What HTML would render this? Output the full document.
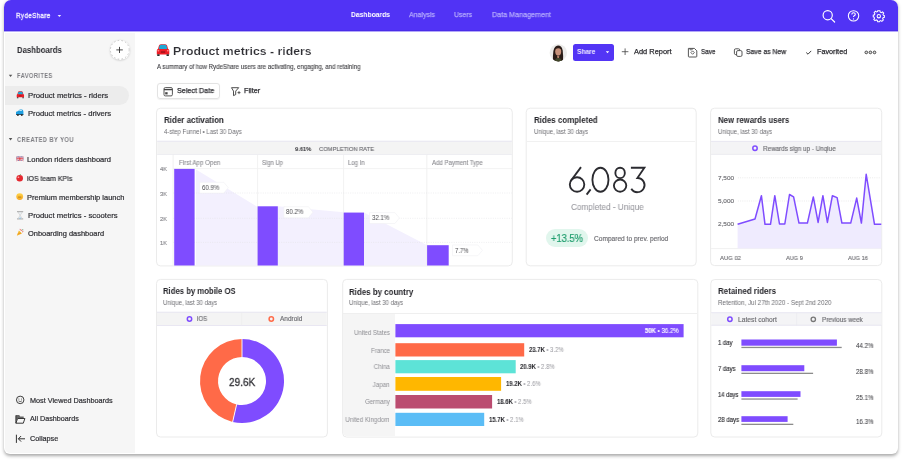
<!DOCTYPE html>
<html><head><meta charset="utf-8"><style>
html,body{margin:0;padding:0;width:904px;height:462px;overflow:hidden;background:#ffffff;}
body{position:relative;font-family:"Liberation Sans", sans-serif;}
.t{position:absolute;white-space:nowrap;line-height:1;will-change:transform;}
.a{position:absolute;}
.card{border:1px solid #ebebeb;border-radius:4px;box-sizing:border-box;background:#fff;}
</style></head><body>
<!-- frame -->
<div class="a" style="left:4px;top:0;width:894px;height:454px;border-radius:7px 7px 6px 6px;background:#fff;box-shadow:0 1.5px 3.5px rgba(0,0,0,0.34);"></div>
<!-- header -->
<div class="a" style="left:4px;top:0;width:894px;height:31px;border-radius:7px 7px 0 0;background:#5133f5;border-bottom:1px solid #4a2ce8;box-sizing:border-box;"></div>
<!-- sidebar -->
<div class="a" style="left:4px;top:31px;width:894px;height:1px;background:rgba(74,48,240,0.42);"></div>
<div class="a" style="left:5px;top:33px;width:130px;height:420px;border-radius:0 0 0 5px;background:#f6f6f6;"></div>
<!-- selected item -->
<div class="a" style="left:5px;top:86px;width:123.5px;height:18.7px;border-radius:0 9.5px 9.5px 0;background:#ececec;"></div>

<!-- header icons -->
<svg class="a" style="left:0;top:0" width="904" height="32" viewBox="0 0 904 32">
  <path d="M57.6 14.9 L61.2 14.9 L59.4 16.9 Z" fill="#eeeaff"/>
  <circle cx="827.7" cy="15.2" r="4.6" fill="none" stroke="#fff" stroke-width="1.15"/>
  <path d="M831.1 18.6 L834.6 22" stroke="#fff" stroke-width="1.2" stroke-linecap="round"/>
  <circle cx="853.55" cy="15.85" r="5.2" fill="none" stroke="#fff" stroke-width="1.05"/>
  <path d="M851.8 14.4 Q851.8 12.7 853.55 12.7 Q855.3 12.7 855.3 14.3 Q855.3 15.3 854.2 15.8 Q853.55 16.1 853.55 17.1" fill="none" stroke="#fff" stroke-width="1.1"/>
  <circle cx="853.5" cy="18.9" r="0.6" fill="#fff"/>
  <g transform="translate(878.8 16.1) scale(0.93)" fill="none" stroke="#fff" stroke-width="1.1">
    <path d="M-1.2 -5.7 L1.2 -5.7 L1.6 -4.3 L2.7 -3.8 L4 -4.6 L5.3 -3.3 L4.5 -2 L5 -0.8 L6 -0.5 L6 1.3 L4.6 1.7 L4.1 2.9 L4.9 4.2 L3.3 5.6 L2.1 4.8 L1 5.3 L0.7 6 L-1.2 6 L-1.6 4.6 L-2.8 4.1 L-4.1 4.9 L-5.4 3.5 L-4.6 2.3 L-5.1 1.1 L-6 0.8 L-6 -1 L-4.7 -1.4 L-4.2 -2.6 L-5 -3.9 L-3.6 -5.2 L-2.4 -4.4 L-1.5 -4.8 Z"/>
    <circle cx="0" cy="0.1" r="1.8"/>
  </g>
</svg>

<!-- sidebar plus button -->
<div class="a" style="left:110px;top:40px;width:19.6px;height:19.6px;border-radius:50%;background:#fff;box-shadow:0 0.5px 2px rgba(0,0,0,0.18);"></div>
<svg class="a" style="left:0;top:32px" width="135" height="422" viewBox="0 32 135 422">
  <circle cx="119.8" cy="49.8" r="9.4" fill="none" stroke="#aaa" stroke-width="0.6" stroke-dasharray="1.6 2.2"/>
  <path d="M119.5 46.9 V53 M116.3 49.9 H122.8" stroke="#333" stroke-width="0.9"/>
  <path d="M8.8 74.7 H12.3 L10.55 77.1 Z" fill="#555"/>
  <path d="M8.8 138.1 H12.3 L10.55 140.5 Z" fill="#555"/>
  <!-- red car (front) -->
  <g transform="translate(16.6 91.3) scale(0.585)">
    <path d="M0.2 10.3 V6.4 Q0.3 5 1.5 4.5 L2.3 1.5 Q2.7 0 4.3 0 H8.6 Q10.2 0 10.6 1.5 L11.4 4.5 Q12.6 5 12.7 6.4 V10.3 Z" fill="#ee1c25"/>
    <path d="M2.2 4.9 L2.9 1.8 Q3.3 0.6 4.6 0.6 H8.3 Q9.6 0.6 10 1.8 L10.7 4.9 Z" fill="#1fa8d4"/>
    <rect x="0.5" y="10" width="2.6" height="1.9" rx="0.6" fill="#2b2b2b"/>
    <rect x="9.8" y="10" width="2.6" height="1.9" rx="0.6" fill="#2b2b2b"/>
    <rect x="4.3" y="7" width="4.3" height="1.7" fill="#a8121b"/>
  </g>
  <!-- blue car (side) -->
  <path d="M16 114.7 V112.5 Q16 111.7 16.8 111.5 L18.2 111 L19.4 109.8 Q19.8 109.4 20.4 109.4 H21.8 Q22.6 109.4 23 110.2 L23.4 111.4 V114.7 Z" fill="#1e9ee0"/>
  <path d="M18.7 111.1 L19.8 110 H21.6 L22.2 111.1 Z" fill="#b9e5f8"/>
  <rect x="16" y="114" width="7.4" height="0.9" fill="#1b4f6e"/>
  <circle cx="17.9" cy="115" r="0.95" fill="#333"/><circle cx="21.8" cy="115" r="0.95" fill="#333"/>
  <!-- UK flag -->
  <g transform="translate(16.4 156.6)">
    <rect x="0" y="0" width="7" height="4.4" rx="0.8" fill="#44509a"/>
    <path d="M0 0 L7 4.4 M7 0 L0 4.4" stroke="#fff" stroke-width="1.1"/>
    <path d="M0 0 L7 4.4 M7 0 L0 4.4" stroke="#d8303c" stroke-width="0.5"/>
    <path d="M3.5 0 V4.4 M0 2.2 H7" stroke="#fff" stroke-width="1.7"/>
    <path d="M3.5 0 V4.4 M0 2.2 H7" stroke="#d8303c" stroke-width="1"/>
  </g>
  <!-- apple -->
  <g transform="translate(16.2 174.4)">
    <circle cx="3.5" cy="3.9" r="3.3" fill="#e52830"/>
    <path d="M3.5 1 L4.4 -0.2" stroke="#3a8a3a" stroke-width="0.8"/>
    <ellipse cx="2.2" cy="2.9" rx="0.9" ry="0.7" fill="#ffb0b0"/>
  </g>
  <!-- neutral face -->
  <defs><linearGradient id="fg" x1="0" y1="0" x2="0" y2="1"><stop offset="0" stop-color="#ffd54a"/><stop offset="1" stop-color="#f6a623"/></linearGradient></defs>
  <g transform="translate(16.2 193.2)">
    <circle cx="3.5" cy="3.4" r="3.4" fill="url(#fg)"/>
    <path d="M1.9 3.9 H5.1" stroke="#8a5a10" stroke-width="0.6"/>
  </g>
  <!-- hourglass -->
  <g transform="translate(16.8 211.4)">
    <rect x="0.2" y="0" width="6.2" height="0.7" fill="#8a8a8a"/>
    <rect x="0.2" y="7.2" width="6.2" height="0.7" fill="#8a8a8a"/>
    <path d="M1.1 0.7 L5.5 0.7 L3.3 3.95 Z M1.1 7.2 L5.5 7.2 L3.3 3.95 Z" fill="#eef3f7" stroke="#b8b8b8" stroke-width="0.45"/>
    <path d="M2 7.2 L4.6 7.2 L3.3 5.9 Z" fill="#7fb7e0"/>
  </g>
  <!-- party popper -->
  <g transform="translate(16.8 228.9)">
    <path d="M0 6.8 L2.1 1.6 L5.2 4.7 Z" fill="#f5b82a"/>
    <path d="M0.6 5.3 L4.2 4.2" stroke="#e27a20" stroke-width="0.5"/>
    <path d="M3.2 0 L3.8 1.5 M5.2 0.6 L4.7 2.1 M6.6 2.5 L5.2 3.1" stroke="#e2463a" stroke-width="0.7"/>
    <circle cx="6" cy="0.8" r="0.5" fill="#3aa06a"/>
  </g>
  <!-- bottom icons -->
  <circle cx="20.2" cy="399.9" r="3.75" fill="none" stroke="#3d3d3d" stroke-width="1"/>
  <circle cx="18.9" cy="399.1" r="0.5" fill="#3d3d3d"/><circle cx="21.5" cy="399.1" r="0.5" fill="#3d3d3d"/>
  <path d="M18.5 400.9 Q20.2 402.4 21.9 400.9" fill="none" stroke="#3d3d3d" stroke-width="0.75"/>
  <path d="M15.9 415.1 H19.2 L20.2 416.4 H23.7 V418.3 H17.5 L15.9 421.5 Z" fill="#666"/>
  <path d="M15.9 415.4 V423.2 H23.3 L24.9 418.5 H17.6 L15.9 423.2" fill="none" stroke="#2e2e2e" stroke-width="0.95" stroke-linejoin="round"/>
  <path d="M16.4 434.7 V442.9" stroke="#333" stroke-width="1"/>
  <path d="M25 438.8 H18.4 M21.1 436 L18.4 438.8 L21.1 441.6" fill="none" stroke="#333" stroke-width="1"/>
</svg>

<!-- title area -->
<svg class="a" style="left:150px;top:38px" width="740" height="70" viewBox="150 38 740 70">
  <!-- title car -->
  <g transform="translate(156.6 44.2)">
    <path d="M0.2 10.3 V6.4 Q0.3 5 1.5 4.5 L2.3 1.5 Q2.7 0 4.3 0 H8.6 Q10.2 0 10.6 1.5 L11.4 4.5 Q12.6 5 12.7 6.4 V10.3 Z" fill="#ee1c25"/>
    <path d="M2.2 4.9 L2.9 1.8 Q3.3 0.6 4.6 0.6 H8.3 Q9.6 0.6 10 1.8 L10.7 4.9 Z" fill="#1fa8d4"/>
    <rect x="0.5" y="10" width="2.6" height="1.7" rx="0.6" fill="#2b2b2b"/>
    <rect x="9.8" y="10" width="2.6" height="1.7" rx="0.6" fill="#2b2b2b"/>
    <rect x="4.3" y="7" width="4.3" height="1.7" fill="#a8121b"/>
    <ellipse cx="1.7" cy="6.6" rx="1" ry="0.7" fill="#ff8a8a"/>
    <ellipse cx="11.2" cy="6.6" rx="1" ry="0.7" fill="#ff8a8a"/>
  </g>
  <!-- calendar icon -->
  <rect x="164" y="87.6" width="8.4" height="8.3" rx="1.3" fill="none" stroke="#444" stroke-width="0.9"/>
  <path d="M164 89.6 H172.4" stroke="#444" stroke-width="1.3"/>
  <rect x="165.2" y="92.2" width="2.4" height="2.2" fill="#444"/>
  <!-- filter icon -->
  <path d="M231.5 87.7 H238.7 L235.7 91.1 V94.6 L233.5 95.6 V91.1 Z" fill="none" stroke="#3a3a3a" stroke-width="0.9" stroke-linejoin="round"/>
  <path d="M237.5 92.6 H240.5 M239 91.1 V94.1" stroke="#3a3a3a" stroke-width="0.8"/>
  <!-- plus add report -->
  <path d="M625.1 48.4 V55 M621.8 51.7 H628.4" stroke="#444" stroke-width="0.8"/>
  <!-- save icon -->
  <path d="M688.4 48.4 H694.4 L696.8 50.8 V56.3 Q696.8 57 696.1 57 H689.1 Q688.4 57 688.4 56.3 Z" fill="none" stroke="#444" stroke-width="0.9" stroke-linejoin="round"/>
  <path d="M690 48.4 V49.8 H692.2 V48.4" fill="none" stroke="#444" stroke-width="0.7"/>
  <path d="M692.6 50.9 L694.3 52.6 L692.6 54.3 L690.9 52.6 Z" fill="none" stroke="#444" stroke-width="0.8"/>
  <!-- copy icon -->
  <rect x="734.4" y="48.8" width="5.4" height="5.8" rx="1.3" fill="none" stroke="#444" stroke-width="0.9"/>
  <rect x="736.6" y="50.6" width="5.4" height="5.8" rx="1.3" fill="#fff" stroke="#444" stroke-width="0.9"/>
  <!-- check -->
  <path d="M806.2 52.5 L808 54.2 L811.2 50.9" fill="none" stroke="#333" stroke-width="0.95"/>
  <!-- dots -->
  <circle cx="866.3" cy="52.4" r="1.35" fill="#ddd" stroke="#333" stroke-width="0.85"/>
  <circle cx="870.4" cy="52.4" r="1.35" fill="#ddd" stroke="#333" stroke-width="0.85"/>
  <circle cx="874.5" cy="52.4" r="1.35" fill="#ddd" stroke="#333" stroke-width="0.85"/>
</svg>
<!-- select date button -->
<div class="a" style="left:156.9px;top:83.3px;width:62.8px;height:15.9px;border:1px solid #e3e3e3;border-radius:3px;box-sizing:border-box;box-shadow:0 0.5px 1px rgba(0,0,0,0.06);"></div>
<!-- avatar -->
<svg class="a" style="left:549px;top:43px" width="19" height="20" viewBox="549 43 19 20">
  <defs><clipPath id="av"><circle cx="558.3" cy="52.7" r="8.7"/></clipPath></defs>
  <g clip-path="url(#av)">
    <rect x="549" y="43" width="19" height="20" fill="#ececea"/>
    <path d="M553 62 Q552.6 56 553.4 51 Q554.4 45.6 558 45.5 Q561.8 45.6 562.7 50.5 Q563.4 56 563 62 Z" fill="#2a1c17"/>
    <ellipse cx="558.2" cy="51.4" rx="3" ry="3.9" fill="#c7917a"/>
    <path d="M555.2 49.6 Q558.2 47.2 561.2 49.4 L561.2 47.8 Q558.2 45.8 555.2 48 Z" fill="#2a1c17"/>
    <path d="M554.2 63 Q555 58.2 558.2 57.6 Q561.4 58.2 562.4 63 Z" fill="#41462a"/>
    <path d="M557 55.4 L559.4 55.4 L559 58 L557.4 58 Z" fill="#b5836e"/>
  </g>
</svg>
<!-- share button -->
<div class="a" style="left:572.5px;top:43.9px;width:41.5px;height:16.9px;border-radius:2.5px;background:#5335f5;"></div>
<svg class="a" style="left:600px;top:44px" width="14" height="17" viewBox="600 44 14 17">
  <path d="M605.8 51.2 H609.2 L607.5 53.2 Z" fill="#fff"/>
</svg>
<!-- cards outlines -->
<svg class="a" style="left:0;top:0" width="904" height="462" viewBox="0 0 904 462">
  <g fill="#fff" stroke="#ebebeb" stroke-width="1">
    <rect x="156.5" y="108.2" width="355.8" height="157.7" rx="4"/>
    <rect x="526.2" y="108.2" width="170" height="157.6" rx="4"/>
    <rect x="710.6" y="108.2" width="171.1" height="157.4" rx="4"/>
    <rect x="156.5" y="279.4" width="170.9" height="157.6" rx="4"/>
    <rect x="342.7" y="279.4" width="355.1" height="157.7" rx="4"/>
    <rect x="710.8" y="279.5" width="171" height="157.5" rx="4"/>
  </g>
</svg>
<!-- rider activation funnel -->
<svg class="a" style="left:156px;top:140px" width="358" height="127" viewBox="156 140 358 127">
  <rect x="157.2" y="141" width="354.7" height="13.6" fill="#f4f4f4"/>
  <path d="M157.2 141.2 H511.9" stroke="#e4e2f0" stroke-width="0.8"/>
  <path d="M157.2 154.5 H511.9" stroke="#ebebf0" stroke-width="0.8"/>
  <polygon points="196,169.5 257.6,207 277.8,206.3 343.7,212.2 364,212.6 427.1,245.2 427.1,265.4 196,265.4" fill="#f3f0fe"/>
  <path d="M173.1 154.6 V265.4 M257.6 154.6 V265.4 M343.6 154.6 V265.4 M426.8 154.6 V265.4" stroke="#eeeeee" stroke-width="0.8"/>
  <path d="M173.1 168.6 H511.9" stroke="#efefef" stroke-width="0.8"/>
  <path d="M173.1 193 H511.9 M173.1 218.3 H511.9 M173.1 242.4 H511.9" stroke="#e4e4e8" stroke-width="0.6" stroke-dasharray="1 1.3"/>
  <rect x="174.2" y="168.9" width="20.4" height="96.6" fill="#7f4cff"/>
  <rect x="257.6" y="206.3" width="20.2" height="59.2" fill="#7f4cff"/>
  <rect x="343.7" y="212.6" width="20.3" height="52.9" fill="#7f4cff"/>
  <rect x="427.1" y="245.2" width="21.6" height="20.3" fill="#7f4cff"/>
  <g fill="#ffffff" stroke="#f0f0f3" stroke-width="0.6">
    <path d="M199.6 182.3 H223.8 L228.3 187.7 L223.8 193.1 H199.6 Z"/>
    <path d="M283.9 206.7 H308.4 L312.9 212.2 L308.4 217.8 H283.9 Z"/>
    <path d="M369.5 212.6 H394.9 L399.4 218 L394.9 223.5 H369.5 Z"/>
    <path d="M452.5 245 H477.9 L482.4 250.3 L477.9 255.7 H452.5 Z"/>
  </g>
</svg>

<!-- rides completed -->
<div class="a" style="left:526.9px;top:141.2px;width:168.4px;height:0.8px;background:#f1f1f1;"></div>
<div class="a" style="left:545.7px;top:229.2px;width:42.3px;height:18.2px;border-radius:9.1px;background:#e1f6ed;"></div>
<svg class="a" style="left:560px;top:160px" width="95" height="40" viewBox="560 160 95 40">
  <g fill="none" stroke="#2b2b30" stroke-width="1.85" stroke-linecap="butt">
    <circle cx="577.05" cy="184.45" r="7.25"/>
    <path d="M581 167.1 L570.7 181"/>
    <path d="M590.6 189.4 L586.6 194.6"/>
    <ellipse cx="600.45" cy="179.7" rx="8.05" ry="12"/>
    <ellipse cx="620.1" cy="172.9" rx="4.75" ry="5.2"/>
    <ellipse cx="620.1" cy="185.6" rx="6.2" ry="6.1"/>
    <path d="M630.9 167.75 H644.4 L637.4 178 A7.1 7.1 0 1 1 631.3 188.7"/>
  </g>
</svg>

<!-- new rewards users -->
<svg class="a" style="left:710px;top:140px" width="174" height="126" viewBox="710 140 174 126">
  <rect x="711.1" y="141.2" width="170.2" height="13.2" fill="#f4f4f6"/>
  <path d="M711.1 141.4 H881.3" stroke="#e4e2f0" stroke-width="0.8"/>
  <path d="M711.1 154.4 H881.3" stroke="#e8e8ee" stroke-width="0.8"/>
  <circle cx="755" cy="148.2" r="2.2" fill="none" stroke="#7f4cff" stroke-width="1.5"/>
  <path d="M737.9 177.8 H881 M737.9 201 H881 M737.9 224.3 H881" stroke="#e3e3e3" stroke-width="0.7" stroke-dasharray="1 1.2"/>
  <path d="M711.1 248.6 H881.3" stroke="#ececec" stroke-width="0.8"/>
  <polygon fill="#efebfe" points="737.6,248.6 737.6,224.3 755,219 761.4,195.7 765,224.3 770.5,224.3 774.8,195.7 779.5,224 784.8,224 789.5,194.5 793.6,196.9 799,223.1 807.4,223.1 813.3,196.9 818.1,222.4 822.9,195.7 827.4,222.4 832.4,195.7 837.1,197.6 841.9,223.1 850.7,223.1 856.7,198.1 861.4,223.1 866.2,174.3 874.5,224.3 881.3,224.3 881.3,248.6"/>
  <polyline fill="none" stroke="#7f4cff" stroke-width="1.5" stroke-linejoin="round" points="737.6,224.3 755,219 761.4,195.7 765,224.3 770.5,224.3 774.8,195.7 779.5,224 784.8,224 789.5,194.5 793.6,196.9 799,223.1 807.4,223.1 813.3,196.9 818.1,222.4 822.9,195.7 827.4,222.4 832.4,195.7 837.1,197.6 841.9,223.1 850.7,223.1 856.7,198.1 861.4,223.1 866.2,174.3 874.5,224.3 881.3,224.3"/>
</svg>

<!-- rides by mobile os -->
<svg class="a" style="left:156px;top:310px" width="172" height="120" viewBox="156 310 172 120">
  <rect x="157" y="312" width="169.8" height="13.6" fill="#f4f4f4"/>
  <path d="M157 312.2 H326.8" stroke="#e4e2f0" stroke-width="0.8"/>
  <path d="M157 325.5 H326.8" stroke="#e4e2f0" stroke-width="0.8"/>
  <path d="M241.6 312.4 V325.3" stroke="#ececec" stroke-width="0.6"/>
  <circle cx="189.5" cy="319" r="2.2" fill="none" stroke="#7f4cff" stroke-width="1.5"/>
  <circle cx="271.3" cy="319" r="2.2" fill="none" stroke="#ff6a48" stroke-width="1.5"/>
  <!-- donut: R=42 r=24 centre 242,381; purple from top clockwise to 193deg -->
  <path d="M242 339 A42 42 0 1 1 232.55 421.92 L236.6 404.38 A24 24 0 1 0 242 357 Z" fill="#7f4cff"/>
  <path d="M232.55 421.92 A42 42 0 0 1 242 339 L242 357 A24 24 0 0 0 236.6 404.38 Z" fill="#ff6a48"/>
  <path d="M242 338.5 V357.2 M232.6 422.2 L236.7 404.2" stroke="#fff" stroke-width="0.9"/>
</svg>

<!-- rides by country -->
<div class="a" style="left:343.1px;top:312.9px;width:52.3px;height:123.3px;background:#f5f5f5;border-radius:0 0 0 4px;"></div>
<div class="a" style="left:343.1px;top:312.5px;width:354.3px;height:0.8px;background:#efefef;"></div>
<svg class="a" style="left:390px;top:320px" width="300" height="110" viewBox="390 320 300 110">
  <rect x="395.4" y="324.1" width="288.2" height="13.2" fill="#7f4cff"/>
  <rect x="395.4" y="343.2" width="128.8" height="13.3" fill="#ff6a48"/>
  <rect x="395.4" y="360.1" width="120.3" height="13.2" fill="#5de3d7"/>
  <rect x="395.4" y="377.0" width="105.7" height="13.8" fill="#ffb700"/>
  <rect x="395.4" y="395.0" width="96.7" height="13.5" fill="#bb4c70"/>
  <rect x="395.4" y="412.8" width="88.8" height="13.2" fill="#5bbdf6"/>
</svg>

<!-- retained riders -->
<svg class="a" style="left:710px;top:310px" width="174" height="120" viewBox="710 310 174 120">
  <rect x="711.2" y="312.5" width="170.3" height="12.9" fill="#f4f4f6"/>
  <path d="M711.2 312.7 H881.5" stroke="#e4e2f0" stroke-width="0.8"/>
  <path d="M711.2 325.3 H881.5" stroke="#e4e2f0" stroke-width="0.8"/>
  <path d="M796.6 312.9 V325.1" stroke="#e9e9ee" stroke-width="0.6"/>
  <circle cx="729.9" cy="319.3" r="2.2" fill="none" stroke="#7f4cff" stroke-width="1.5"/>
  <circle cx="813.3" cy="319.3" r="2.2" fill="none" stroke="#777" stroke-width="1.3"/>
  <rect x="741.4" y="339.5" width="95.5" height="6.2" fill="#7f4cff"/>
  <rect x="741.4" y="346.8" width="100.3" height="1.3" fill="#8c8c8c"/>
  <rect x="741.4" y="365.2" width="62.9" height="6" fill="#7f4cff"/>
  <rect x="741.4" y="372.7" width="71.7" height="1.3" fill="#8c8c8c"/>
  <rect x="741.4" y="391.2" width="59.1" height="5.7" fill="#7f4cff"/>
  <rect x="741.4" y="398.4" width="56.2" height="1.3" fill="#8c8c8c"/>
  <rect x="741.4" y="416.2" width="46.2" height="5.7" fill="#7f4cff"/>
  <rect x="741.4" y="423.7" width="51.9" height="1.3" fill="#8c8c8c"/>
</svg>

<div class='t' style='left:16.00px;transform-origin:0 50%;top:11.96px;font-size:8.0px;font-weight:400;color:#f0edff;transform:scaleX(0.8050);-webkit-text-stroke-width:0.35px;letter-spacing:0.3px;'>RydeShare</div><div class='t' style='left:351.00px;transform-origin:0 50%;top:10.96px;font-size:8.0px;font-weight:700;color:#ffffff;transform:scaleX(0.8435);'>Dashboards</div><div class='t' style='left:409.00px;transform-origin:0 50%;top:10.96px;font-size:8.0px;font-weight:400;color:#b3a9fc;transform:scaleX(0.8726);-webkit-text-stroke-width:0.25px;'>Analysis</div><div class='t' style='left:454.00px;transform-origin:0 50%;top:10.96px;font-size:8.0px;font-weight:400;color:#b3a9fc;transform:scaleX(0.8616);-webkit-text-stroke-width:0.25px;'>Users</div><div class='t' style='left:491.60px;transform-origin:0 50%;top:10.96px;font-size:8.0px;font-weight:400;color:#b3a9fc;transform:scaleX(0.8963);-webkit-text-stroke-width:0.25px;'>Data Management</div><div class='t' style='left:16.50px;transform-origin:0 50%;top:45.82px;font-size:9.0px;font-weight:700;color:#2e2e33;transform:scaleX(0.8613);'>Dashboards</div><div class='t' style='left:16.50px;transform-origin:0 50%;top:72.88px;font-size:6.8px;font-weight:700;color:#7c7c81;transform:scaleX(0.8222);letter-spacing:0.6px;'>FAVORITES</div><div class='t' style='left:27.80px;transform-origin:0 50%;top:92.18px;font-size:7.2px;font-weight:400;color:#2e2e33;transform:scaleX(1.0795);-webkit-text-stroke-width:0.2px;'>Product metrics - riders</div><div class='t' style='left:27.80px;transform-origin:0 50%;top:110.28px;font-size:7.2px;font-weight:400;color:#2e2e33;transform:scaleX(1.0682);-webkit-text-stroke-width:0.2px;'>Product metrics - drivers</div><div class='t' style='left:16.60px;transform-origin:0 50%;top:136.73px;font-size:6.8px;font-weight:700;color:#7c7c81;transform:scaleX(0.8312);letter-spacing:0.6px;'>CREATED BY YOU</div><div class='t' style='left:27.30px;transform-origin:0 50%;top:155.58px;font-size:7.2px;font-weight:400;color:#2e2e33;transform:scaleX(1.0510);-webkit-text-stroke-width:0.2px;'>London riders dashboard</div><div class='t' style='left:27.30px;transform-origin:0 50%;top:174.68px;font-size:7.2px;font-weight:400;color:#2e2e33;transform:scaleX(0.9631);-webkit-text-stroke-width:0.2px;'>iOS team KPIs</div><div class='t' style='left:27.30px;transform-origin:0 50%;top:193.58px;font-size:7.2px;font-weight:400;color:#2e2e33;transform:scaleX(1.0419);-webkit-text-stroke-width:0.2px;'>Premium membership launch</div><div class='t' style='left:27.80px;transform-origin:0 50%;top:212.18px;font-size:7.2px;font-weight:400;color:#2e2e33;transform:scaleX(1.0733);-webkit-text-stroke-width:0.2px;'>Product metrics - scooters</div><div class='t' style='left:27.80px;transform-origin:0 50%;top:229.58px;font-size:7.2px;font-weight:400;color:#2e2e33;transform:scaleX(1.0349);-webkit-text-stroke-width:0.2px;'>Onboarding dashboard</div><div class='t' style='left:30.30px;transform-origin:0 50%;top:396.78px;font-size:7.2px;font-weight:400;color:#2e2e33;transform:scaleX(1.0112);-webkit-text-stroke-width:0.2px;'>Most Viewed Dashboards</div><div class='t' style='left:30.30px;transform-origin:0 50%;top:415.38px;font-size:7.2px;font-weight:400;color:#2e2e33;-webkit-text-stroke-width:0.2px;'>All Dashboards</div><div class='t' style='left:30.30px;transform-origin:0 50%;top:435.28px;font-size:7.2px;font-weight:400;color:#2e2e33;transform:scaleX(1.0118);-webkit-text-stroke-width:0.2px;'>Collapse</div><div class='t' style='left:173.00px;transform-origin:0 50%;top:45.92px;font-size:11.8px;font-weight:700;color:#2e2e33;transform:scaleX(1.0421);-webkit-text-stroke:0.18px #fff;'>Product metrics - riders</div><div class='t' style='left:156.60px;transform-origin:0 50%;top:63.86px;font-size:6.3px;font-weight:400;color:#3c3c40;transform:scaleX(0.9653);-webkit-text-stroke-width:0.1px;'>A summary of how RydeShare users are activating, engaging, and retaining</div><div class='t' style='left:176.50px;transform-origin:0 50%;top:87.21px;font-size:7.3px;font-weight:400;color:#2e2e33;transform:scaleX(0.9858);-webkit-text-stroke-width:0.25px;'>Select Date</div><div class='t' style='left:243.90px;transform-origin:0 50%;top:87.21px;font-size:7.3px;font-weight:400;color:#2e2e33;transform:scaleX(1.0050);-webkit-text-stroke-width:0.25px;'>Filter</div><div class='t' style='left:576.90px;transform-origin:0 50%;top:47.71px;font-size:7.0px;font-weight:700;color:#ffffff;transform:scaleX(0.9502);-webkit-text-stroke:0.1px #5335f5;'>Share</div><div class='t' style='left:633.70px;transform-origin:0 50%;top:48.18px;font-size:7.2px;font-weight:400;color:#2e2e33;transform:scaleX(1.0341);-webkit-text-stroke-width:0.25px;'>Add Report</div><div class='t' style='left:700.90px;transform-origin:0 50%;top:48.08px;font-size:7.2px;font-weight:400;color:#2e2e33;transform:scaleX(0.8786);-webkit-text-stroke-width:0.25px;'>Save</div><div class='t' style='left:746.20px;transform-origin:0 50%;top:48.08px;font-size:7.2px;font-weight:400;color:#2e2e33;transform:scaleX(0.9443);-webkit-text-stroke-width:0.25px;'>Save as New</div><div class='t' style='left:817.00px;transform-origin:0 50%;top:48.08px;font-size:7.2px;font-weight:400;color:#2e2e33;transform:scaleX(1.0077);-webkit-text-stroke-width:0.25px;'>Favorited</div><div class='t' style='left:163.70px;transform-origin:0 50%;top:116.15px;font-size:8.8px;font-weight:700;color:#26262b;transform:scaleX(0.9076);'>Rider activation</div><div class='t' style='left:163.70px;transform-origin:0 50%;top:128.79px;font-size:6.4px;font-weight:400;color:#6e6e73;transform:scaleX(0.9456);'>4-step Funnel • Last 30 Days</div><div class='t' style='left:533.80px;transform-origin:0 50%;top:116.30px;font-size:8.8px;font-weight:700;color:#26262b;transform:scaleX(0.9033);'>Rides completed</div><div class='t' style='left:533.80px;transform-origin:0 50%;top:128.99px;font-size:6.4px;font-weight:400;color:#6e6e73;transform:scaleX(0.9360);'>Unique, last 30 days</div><div class='t' style='left:718.00px;transform-origin:0 50%;top:116.35px;font-size:8.8px;font-weight:700;color:#26262b;transform:scaleX(0.8890);'>New rewards users</div><div class='t' style='left:718.00px;transform-origin:0 50%;top:128.99px;font-size:6.4px;font-weight:400;color:#6e6e73;transform:scaleX(0.9360);'>Unique, last 30 days</div><div class='t' style='left:163.40px;transform-origin:0 50%;top:287.05px;font-size:8.8px;font-weight:700;color:#26262b;transform:scaleX(0.8787);'>Rides by mobile OS</div><div class='t' style='left:163.40px;transform-origin:0 50%;top:299.79px;font-size:6.4px;font-weight:400;color:#6e6e73;transform:scaleX(0.9360);'>Unique, last 30 days</div><div class='t' style='left:348.90px;transform-origin:0 50%;top:287.50px;font-size:8.8px;font-weight:700;color:#26262b;transform:scaleX(0.9009);'>Rides by country</div><div class='t' style='left:348.90px;transform-origin:0 50%;top:299.89px;font-size:6.4px;font-weight:400;color:#6e6e73;transform:scaleX(0.9360);'>Unique, last 30 days</div><div class='t' style='left:718.00px;transform-origin:0 50%;top:287.15px;font-size:8.8px;font-weight:700;color:#26262b;transform:scaleX(0.9056);'>Retained riders</div><div class='t' style='left:718.00px;transform-origin:0 50%;top:299.59px;font-size:6.4px;font-weight:400;color:#6e6e73;transform:scaleX(0.9721);'>Retention, Jul 27th 2020 - Sept 2nd 2020</div><div class='t' style='left:294.90px;transform-origin:0 50%;top:145.62px;font-size:6.2px;font-weight:700;color:#2e2e33;transform:scaleX(0.9289);'>9.61%</div><div class='t' style='left:318.90px;transform-origin:0 50%;top:145.62px;font-size:6.2px;font-weight:400;color:#6e6e73;transform:scaleX(0.9391);-webkit-text-stroke-width:0.15px;'>COMPLETION RATE</div><div class='t' style='left:178.60px;transform-origin:0 50%;top:159.79px;font-size:6.4px;font-weight:400;color:#8c8c91;transform:scaleX(0.9689);-webkit-text-stroke-width:0.1px;'>First App Open</div><div class='t' style='left:262.10px;transform-origin:0 50%;top:159.79px;font-size:6.4px;font-weight:400;color:#8c8c91;transform:scaleX(0.9187);-webkit-text-stroke-width:0.1px;'>Sign Up</div><div class='t' style='left:348.40px;transform-origin:0 50%;top:159.79px;font-size:6.4px;font-weight:400;color:#8c8c91;transform:scaleX(0.9336);-webkit-text-stroke-width:0.1px;'>Log In</div><div class='t' style='left:432.10px;transform-origin:0 50%;top:159.79px;font-size:6.4px;font-weight:400;color:#8c8c91;transform:scaleX(0.9445);-webkit-text-stroke-width:0.1px;'>Add Payment Type</div><div class='t' style='left:160.00px;transform-origin:0 50%;top:167.01px;font-size:5.9px;font-weight:400;color:#88888d;transform:scaleX(0.9697);-webkit-text-stroke-width:0.15px;'>4K</div><div class='t' style='left:160.00px;transform-origin:0 50%;top:191.91px;font-size:5.9px;font-weight:400;color:#88888d;transform:scaleX(0.9697);-webkit-text-stroke-width:0.15px;'>3K</div><div class='t' style='left:160.00px;transform-origin:0 50%;top:216.71px;font-size:5.9px;font-weight:400;color:#88888d;transform:scaleX(0.9697);-webkit-text-stroke-width:0.15px;'>2K</div><div class='t' style='left:160.00px;transform-origin:0 50%;top:241.21px;font-size:5.9px;font-weight:400;color:#88888d;transform:scaleX(0.9697);-webkit-text-stroke-width:0.15px;'>1K</div><div class='t' style='left:201.70px;transform-origin:0 50%;top:184.96px;font-size:6.3px;font-weight:400;color:#4a4a4f;transform:scaleX(0.9631);'>60.9%</div><div class='t' style='left:286.00px;transform-origin:0 50%;top:209.46px;font-size:6.3px;font-weight:400;color:#4a4a4f;transform:scaleX(0.9631);'>80.2%</div><div class='t' style='left:371.60px;transform-origin:0 50%;top:215.26px;font-size:6.3px;font-weight:400;color:#4a4a4f;transform:scaleX(0.9631);'>32.1%</div><div class='t' style='left:454.60px;transform-origin:0 50%;top:247.56px;font-size:6.3px;font-weight:400;color:#4a4a4f;transform:scaleX(0.9402);'>7.7%</div><div class='t' style='left:570.60px;transform-origin:0 50%;top:202.50px;font-size:8.8px;font-weight:400;color:#9a9aa0;transform:scaleX(0.9304);-webkit-text-stroke-width:0.1px;'>Completed - Unique</div><div class='t' style='left:550.90px;transform-origin:0 50%;top:232.82px;font-size:10.8px;font-weight:400;color:#1e9d6d;transform:scaleX(0.8667);-webkit-text-stroke-width:0.2px;'>+13.5%</div><div class='t' style='left:594.00px;transform-origin:0 50%;top:235.66px;font-size:6.6px;font-weight:400;color:#6e6e73;-webkit-text-stroke-width:0.15px;'>Compared to prev. period</div><div class='t' style='left:762.90px;transform-origin:0 50%;top:145.56px;font-size:6.6px;font-weight:400;color:#6e6e73;transform:scaleX(0.9582);-webkit-text-stroke-width:0.15px;'>Rewards sign up - Unqiue</div><div class='t' style='left:717.70px;transform-origin:0 50%;top:174.95px;font-size:6.0px;font-weight:400;color:#6e6e73;transform:scaleX(1.0722);-webkit-text-stroke-width:0.15px;'>7,500</div><div class='t' style='left:717.70px;transform-origin:0 50%;top:198.15px;font-size:6.0px;font-weight:400;color:#6e6e73;transform:scaleX(1.0722);-webkit-text-stroke-width:0.15px;'>5,000</div><div class='t' style='left:717.70px;transform-origin:0 50%;top:221.45px;font-size:6.0px;font-weight:400;color:#6e6e73;transform:scaleX(1.0722);-webkit-text-stroke-width:0.15px;'>2,500</div><div class='t' style='left:719.80px;transform-origin:0 50%;top:254.75px;font-size:6.0px;font-weight:400;color:#707075;transform:scaleX(0.9792);-webkit-text-stroke-width:0.15px;'>AUG 02</div><div class='t' style='left:786.30px;transform-origin:0 50%;top:254.75px;font-size:6.0px;font-weight:400;color:#707075;transform:scaleX(0.9325);-webkit-text-stroke-width:0.15px;'>AUG 9</div><div class='t' style='left:848.30px;transform-origin:0 50%;top:254.75px;font-size:6.0px;font-weight:400;color:#707075;transform:scaleX(0.9277);-webkit-text-stroke-width:0.15px;'>AUG 16</div><div class='t' style='left:197.00px;transform-origin:0 50%;top:316.29px;font-size:6.4px;font-weight:400;color:#6e6e73;transform:scaleX(0.9384);-webkit-text-stroke-width:0.15px;'>iOS</div><div class='t' style='left:279.60px;transform-origin:0 50%;top:316.29px;font-size:6.4px;font-weight:400;color:#6e6e73;transform:scaleX(1.0167);-webkit-text-stroke-width:0.15px;'>Android</div><div class='t' style='left:228.60px;transform-origin:0 50%;top:375.99px;font-size:11.7px;font-weight:400;color:#2e2e33;transform:scaleX(0.8577);-webkit-text-stroke-width:0.3px;'>29.6K</div><div class='t' style='right:514.20px;transform-origin:100% 50%;top:329.73px;font-size:6.8px;font-weight:400;color:#8e8e93;transform:scaleX(0.8747);'>United States</div><div class='t' style='right:225.20px;transform-origin:100% 50%;top:327.99px;font-size:6.4px;font-weight:400;color:#ffffff;transform:scaleX(0.9479);-webkit-text-stroke-width:0.1px;'><b>50K</b> • 36.2%</div><div class='t' style='right:514.20px;transform-origin:100% 50%;top:347.58px;font-size:6.8px;font-weight:400;color:#8e8e93;transform:scaleX(0.9028);'>France</div><div class='t' style='left:528.70px;transform-origin:0 50%;top:347.14px;font-size:6.4px;font-weight:400;color:#a0a0a6;transform:scaleX(0.9246);-webkit-text-stroke-width:0.05px;'><b style="color:#2e2e33">23.7K</b> • 3.2%</div><div class='t' style='right:514.20px;transform-origin:100% 50%;top:364.43px;font-size:6.8px;font-weight:400;color:#8e8e93;transform:scaleX(0.9006);'>China</div><div class='t' style='left:520.20px;transform-origin:0 50%;top:363.99px;font-size:6.4px;font-weight:400;color:#a0a0a6;transform:scaleX(0.9246);-webkit-text-stroke-width:0.05px;'><b style="color:#2e2e33">20.9K</b> • 2.8%</div><div class='t' style='right:514.20px;transform-origin:100% 50%;top:381.63px;font-size:6.8px;font-weight:400;color:#8e8e93;transform:scaleX(0.9120);'>Japan</div><div class='t' style='left:505.60px;transform-origin:0 50%;top:381.19px;font-size:6.4px;font-weight:400;color:#a0a0a6;transform:scaleX(0.9246);-webkit-text-stroke-width:0.05px;'><b style="color:#2e2e33">19.2K</b> • 2.6%</div><div class='t' style='right:514.20px;transform-origin:100% 50%;top:399.48px;font-size:6.8px;font-weight:400;color:#8e8e93;transform:scaleX(0.8908);'>Germany</div><div class='t' style='left:496.60px;transform-origin:0 50%;top:399.04px;font-size:6.4px;font-weight:400;color:#a0a0a6;transform:scaleX(0.9246);-webkit-text-stroke-width:0.05px;'><b style="color:#2e2e33">18.6K</b> • 2.5%</div><div class='t' style='right:514.20px;transform-origin:100% 50%;top:417.13px;font-size:6.8px;font-weight:400;color:#8e8e93;transform:scaleX(0.9096);'>United Kingdom</div><div class='t' style='left:488.70px;transform-origin:0 50%;top:416.69px;font-size:6.4px;font-weight:400;color:#a0a0a6;transform:scaleX(0.9246);-webkit-text-stroke-width:0.05px;'><b style="color:#2e2e33">15.7K</b> • 2.1%</div><div class='t' style='left:737.90px;transform-origin:0 50%;top:316.66px;font-size:6.6px;font-weight:400;color:#6e6e73;transform:scaleX(1.0177);-webkit-text-stroke-width:0.15px;'>Latest cohort</div><div class='t' style='left:821.50px;transform-origin:0 50%;top:316.66px;font-size:6.6px;font-weight:400;color:#6e6e73;transform:scaleX(0.9513);-webkit-text-stroke-width:0.15px;'>Previous week</div><div class='t' style='left:717.50px;transform-origin:0 50%;top:340.39px;font-size:6.4px;font-weight:400;color:#2e2e33;transform:scaleX(0.9207);-webkit-text-stroke-width:0.15px;'>1 day</div><div class='t' style='left:717.50px;transform-origin:0 50%;top:365.89px;font-size:6.4px;font-weight:400;color:#2e2e33;transform:scaleX(0.9234);-webkit-text-stroke-width:0.15px;'>7 days</div><div class='t' style='left:717.50px;transform-origin:0 50%;top:391.59px;font-size:6.4px;font-weight:400;color:#2e2e33;transform:scaleX(0.9066);-webkit-text-stroke-width:0.15px;'>14 days</div><div class='t' style='left:717.50px;transform-origin:0 50%;top:416.79px;font-size:6.4px;font-weight:400;color:#2e2e33;transform:scaleX(0.9379);-webkit-text-stroke-width:0.15px;'>28 days</div><div class='t' style='left:856.40px;transform-origin:0 50%;top:343.29px;font-size:6.4px;font-weight:400;color:#3a3a3f;transform:scaleX(0.9600);-webkit-text-stroke-width:0.05px;'>44.2%</div><div class='t' style='left:856.40px;transform-origin:0 50%;top:368.99px;font-size:6.4px;font-weight:400;color:#3a3a3f;transform:scaleX(0.9600);-webkit-text-stroke-width:0.05px;'>28.8%</div><div class='t' style='left:856.40px;transform-origin:0 50%;top:394.69px;font-size:6.4px;font-weight:400;color:#3a3a3f;transform:scaleX(0.9600);-webkit-text-stroke-width:0.05px;'>25.1%</div><div class='t' style='left:856.40px;transform-origin:0 50%;top:419.19px;font-size:6.4px;font-weight:400;color:#3a3a3f;transform:scaleX(0.9600);-webkit-text-stroke-width:0.05px;'>16.3%</div>
</body></html>
